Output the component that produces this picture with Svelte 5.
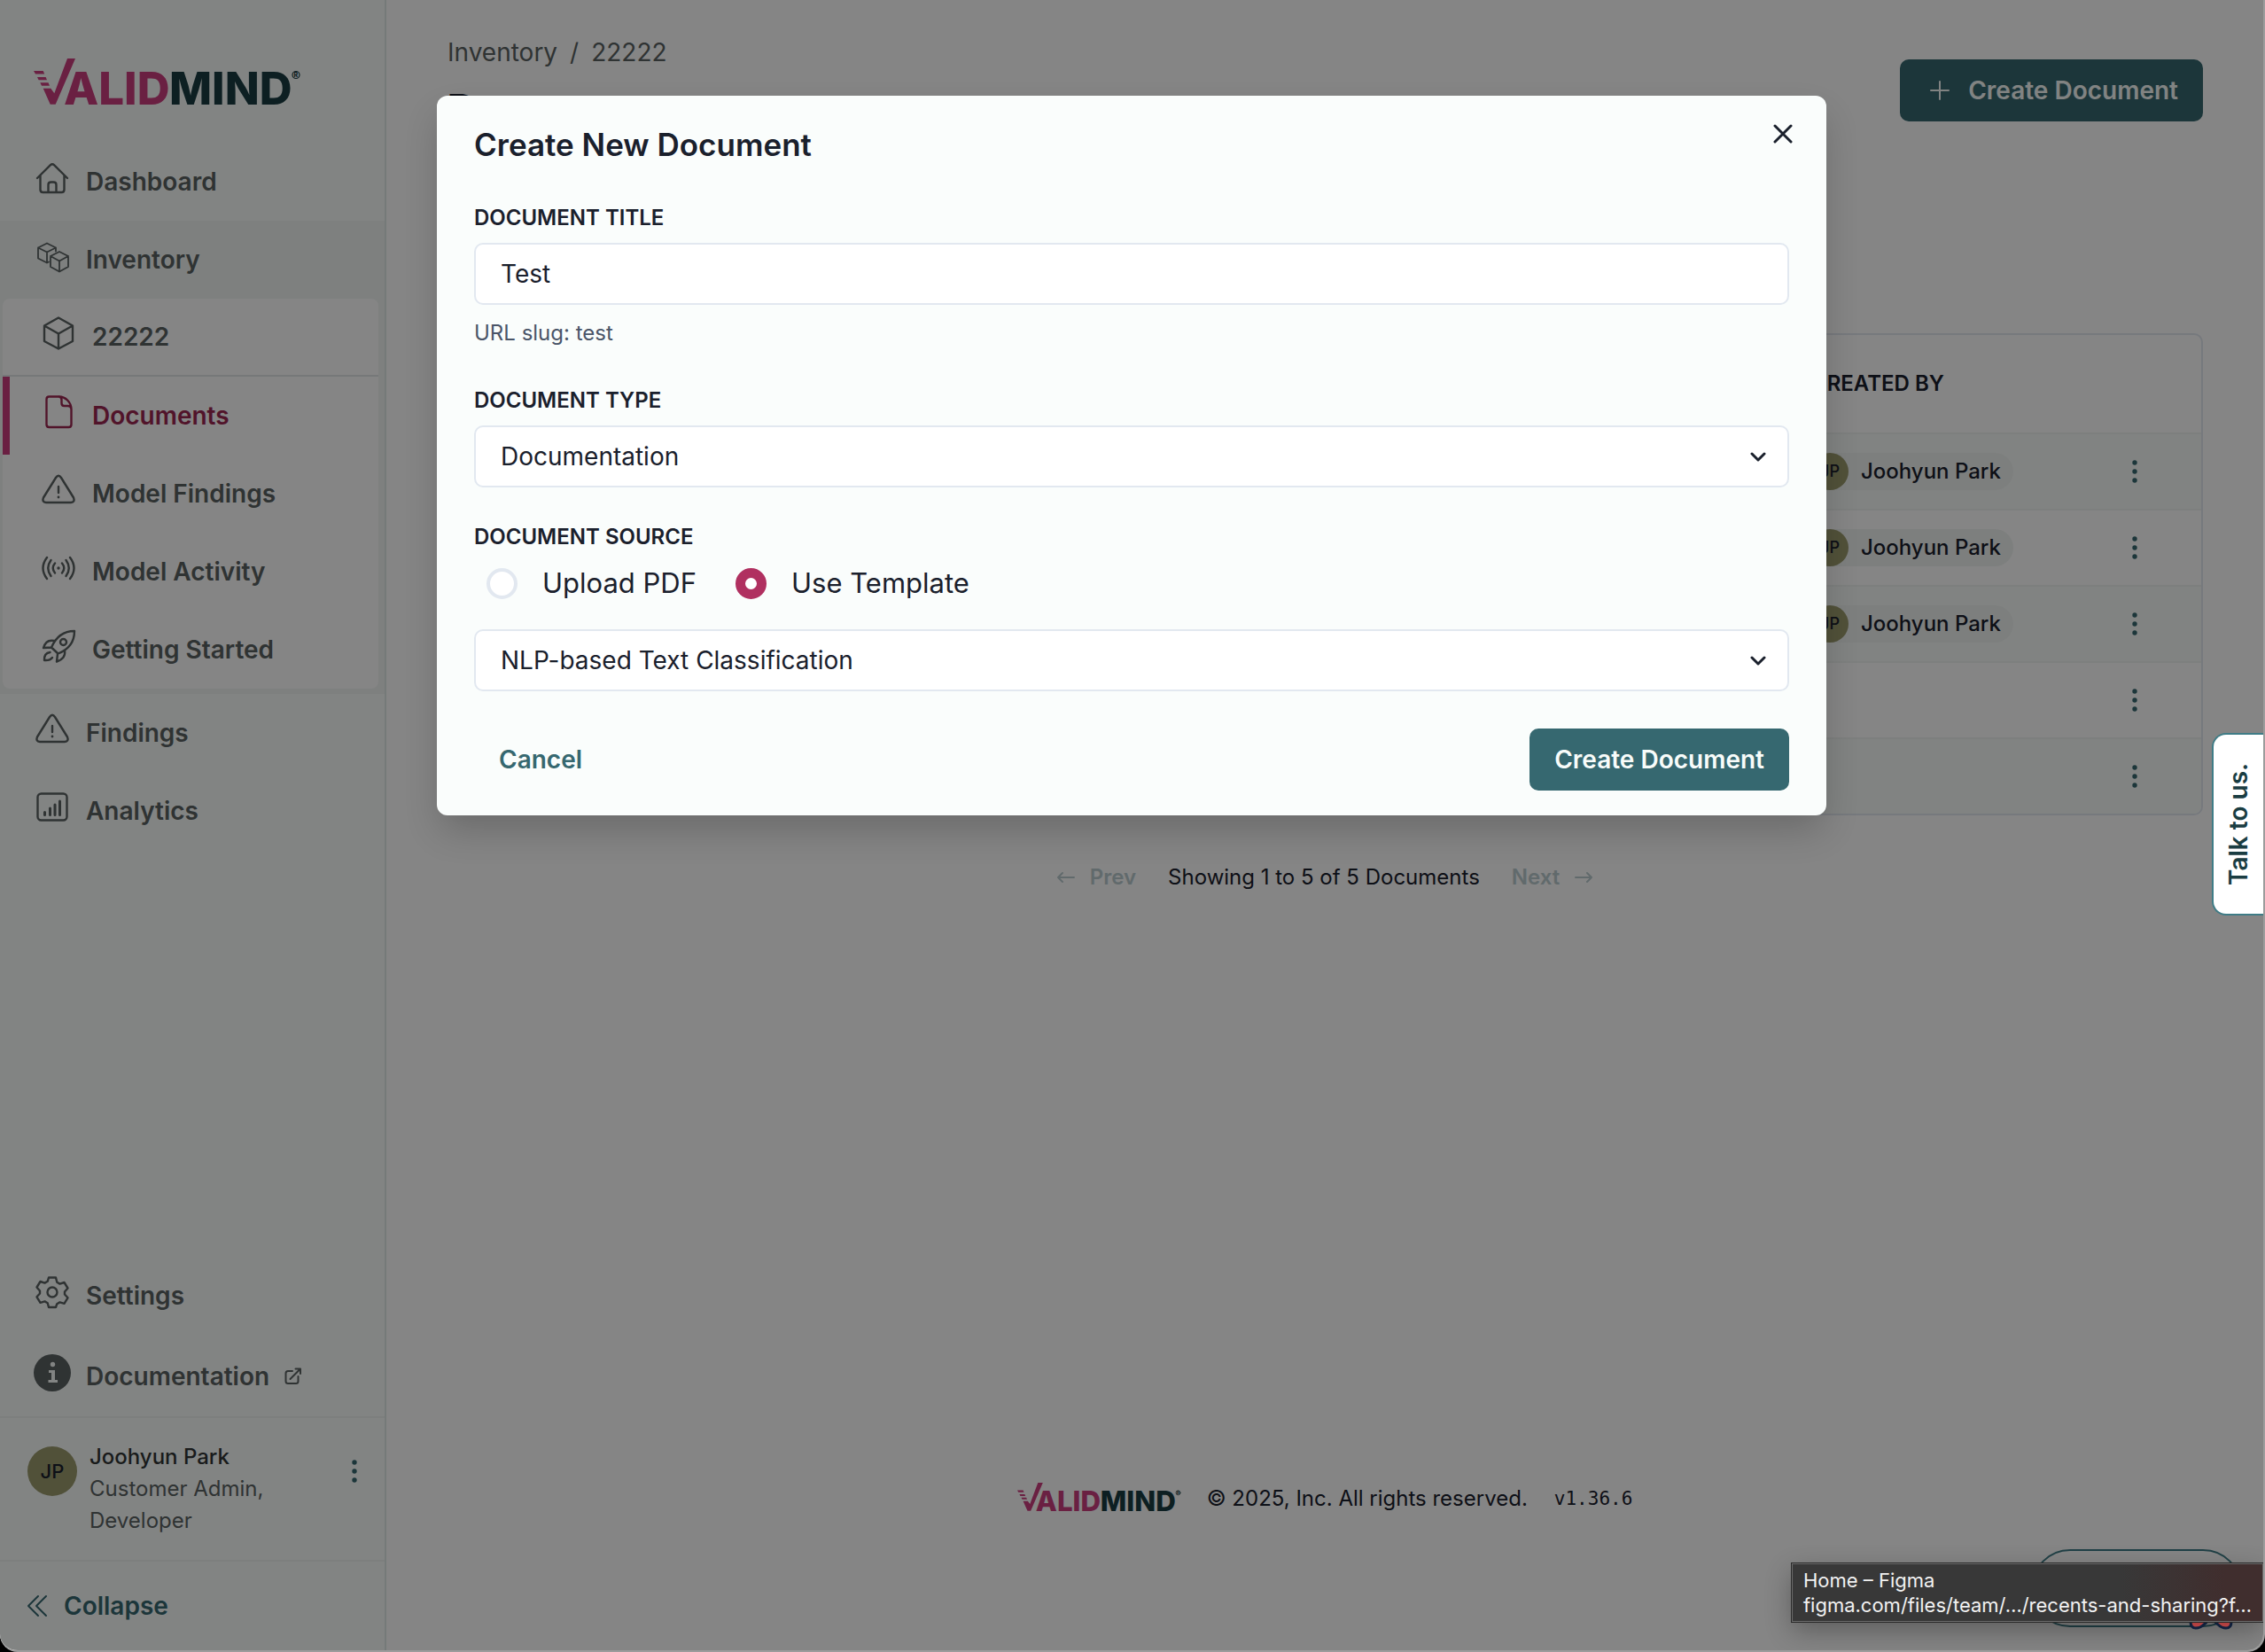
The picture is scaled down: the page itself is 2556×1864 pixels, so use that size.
<script lang="ts">
  // ============================================================================
  // Navigation
  // ============================================================================

  const modelItems = [
    { label: 'Documents', icon: 'document', active: true },
    { label: 'Model Findings', icon: 'warning', active: false },
    { label: 'Model Activity', icon: 'activity', active: false },
    { label: 'Getting Started', icon: 'rocket', active: false },
  ];

  const user = {
    name: 'Joohyun Park',
    initials: 'JP',
    roles: 'Customer Admin, Developer',
  };

  const authors: (string | null)[] = [user.name, user.name, user.name, null, null];

  // ============================================================================
  // Form state
  // ============================================================================

  let title = $state('Test');
  let documentType = $state('Documentation');
  let source = $state('template');
  let template = $state('NLP-based Text Classification');

  let slug = $derived(title.trim().toLowerCase().replace(/\s+/g, '-'));
</script>

{#snippet logo()}
  <svg class="logo" viewBox="0 0 300 52" role="img" aria-label="ValidMind">
    <g fill="#cc3f7f">
      <path d="M0 14h10.7l1.5 3.6H2zM4 21h9.6l1.4 3.3H5.600zM7.300 27.200h9.200l1.500 3.500H9z" />
      <path d="M10.700 33.700h8.600l4 5.500L38 0h9L24.700 51.700h-6z" />
      <text x="34" y="51.700">ALID</text>
    </g>
    <g fill="#1a3d42">
      <text x="153" y="51.700">MIND</text>
      <text class="mark" x="293.500" y="21.200">R</text>
    </g>
    <circle cx="296" cy="18.500" r="4" fill="none" stroke="#1a3d42" stroke-width="1.200" />
  </svg>
{/snippet}

{#snippet kebab()}
  <svg width="6" height="28" viewBox="0 0 6 28" fill="#366870" aria-hidden="true">
    <circle cx="3" cy="4" r="2.700" /><circle cx="3" cy="14" r="2.700" /><circle cx="3" cy="24" r="2.700" />
  </svg>
{/snippet}

{#snippet icon(name: string)}
  <svg class="icon" viewBox="0 0 42 42" aria-hidden="true">
    {#if name === 'home'}
      <path d="M4 21 19 6.200q2-2 4 0L38 21M7.500 18v16q0 3 3 3h21q3 0 3-3V18M16.500 37V28.500q0-3 3-3h3q3 0 3 3V37" />
    {:else if name === 'boxes'}
      <g stroke-width="1.800">
        <path d="M17 27.500l-2 1-10-5v-12l10-5 10 5v4M5 11.500l10 5 10-5M15 16.500v12" />
        <path d="M29 16l10 5v12l-10 5.500L19 33V21zM19 21l10 5.500L39 21M29 26.500v12" />
      </g>
    {:else if name === 'box'}
      <path d="M21 3.500l16 9v17.500l-16 8.500-16-8.500V12.500zM5 12.500l16 9 16-9M21 21.500v17" />
    {:else if name === 'document'}
      <path d="M21.500 3.500H10.500q-3 0-3 3v28.500q0 3 3 3h22q3 0 3-3V18C35.500 10 29 3.500 21.500 3.500q3 .5 3 3.500v4q0 3 3 3h4q3.500 0 4 3.500" />
    {:else if name === 'warning'}
      <path d="M18 7q3-4.500 6 0L38 29.500q2 5-3 5.500H7q-5-.5-3-5.500zM21 17v7" />
      <circle class="solid" cx="21" cy="29" r="1.400" />
    {:else if name === 'activity'}
      <path d="M8 9Q-1 21 8 33M12.500 12Q6 21 12.500 30M17 15.500Q12.500 21 17 26.500M34 9q9 12 0 24M29.500 12q6.500 9 0 18M25 15.500q4.500 5.500 0 11" />
      <circle class="solid" cx="21" cy="21" r="1.700" />
    {:else if name === 'rocket'}
      <path d="M13 22.500C18 11 27 4 39 4c0 12-7 21-18.500 25.500zM16 15q-9-2-12 8l9.500-.5M28 26q1.500 9-9 12.500l1-8.500M11.500 28q-7 1-6.500 9 6.500.5 9-3" />
      <circle cx="26.500" cy="16.500" r="3.500" />
    {:else if name === 'chart'}
      <rect x="4.500" y="5.500" width="33" height="30" rx="4" />
      <path stroke-width="3" d="M12.500 26.500v3M18.500 22v7.500M24 18v11.500M29.500 14v15.500" />
    {:else if name === 'gear'}
      <path d="M17 4.500h8l1.300 5.300 3.200 1.800 5-1.600 4 6.500-3.500 4v3l3.500 3.800-4 6.500-5-1.400-3.200 1.800L25 38h-8l-1.300-4.800-3.200-1.800-5 1.400-4-6.500L7 22.500v-3l-3.500-4 4-6.500 5 1.600 3.200-1.800z" />
      <circle cx="21" cy="21" r="5.500" />
    {:else if name === 'info'}
      <circle class="solid" cx="21" cy="21" r="21" />
      <g class="knockout">
        <circle cx="21.500" cy="11.500" r="2.700" />
        <path d="M17 18h7v11h3v3H16.500v-3H20v-8h-3z" />
      </g>
    {/if}
  </svg>
{/snippet}

<div class="window">
  <aside class="sidebar">
    <a class="brand" href="#home">{@render logo()}</a>

    <nav class="nav">
      <a class="nav-item" href="#dashboard">{@render icon('home')}Dashboard</a>

      <div class="nav-group">
        <a class="nav-item" href="#inventory">{@render icon('boxes')}Inventory</a>
        <div class="submenu">
          <a class="nav-item model" href="#model">{@render icon('box')}22222</a>
          {#each modelItems as item}
            <a class="nav-item" class:active={item.active} href="#{item.icon}">
              {@render icon(item.icon)}{item.label}
            </a>
          {/each}
        </div>
      </div>

      <a class="nav-item" href="#findings">{@render icon('warning')}Findings</a>
      <a class="nav-item" href="#analytics">{@render icon('chart')}Analytics</a>
    </nav>

    <div class="sidebar-bottom">
      <a class="nav-item" href="#settings">{@render icon('gear')}Settings</a>
      <a class="nav-item" href="#docs">
        {@render icon('info')}Documentation
        <svg class="external" viewBox="0 0 20 20" aria-hidden="true">
          <path d="M9 4H4Q1.500 4 1.500 6.500v9Q1.500 18 4 18h9q2.500 0 2.500-2.500V10M6.500 13 18 1.500M12.500 1.500H18V7" />
        </svg>
      </a>
      <div class="user">
        <span class="avatar">{user.initials}</span>
        <div class="user-text">
          <div class="user-name">{user.name}</div>
          <div>{user.roles}</div>
        </div>
        <button class="bare user-menu" aria-label="User menu">{@render kebab()}</button>
      </div>
      <button class="bare collapse">
        <svg width="24" height="26" viewBox="0 0 24 26" aria-hidden="true">
          <path d="M13 2 2 13l11 11M22 2 11 13l11 11" />
        </svg>
        Collapse
      </button>
    </div>
  </aside>

  <main class="main">
    <header class="page-header">
      <div>
        <nav class="breadcrumb" aria-label="Breadcrumb">
          <a href="#inventory">Inventory</a><span>/</span><a href="#model">22222</a>
        </nav>
        <h1>Documents</h1>
      </div>
      <button class="primary">
        <svg width="28" height="28" viewBox="0 0 28 28" aria-hidden="true">
          <path d="M14 4v20M4 14h20" />
        </svg>
        Create Document
      </button>
    </header>

    <div class="table-wrap">
      <table>
        <thead>
          <tr>
            <th></th>
            <th class="col-author">CREATED BY</th>
            <th class="col-menu"></th>
          </tr>
        </thead>
        <tbody>
          {#each authors as author}
            <tr>
              <td></td>
              <td>
                {#if author}
                  <span class="chip"><span class="avatar small">JP</span>{author}</span>
                {/if}
              </td>
              <td>
                <button class="bare" aria-label="Document actions">{@render kebab()}</button>
              </td>
            </tr>
          {/each}
        </tbody>
      </table>
    </div>

    <div class="pagination">
      <button class="bare page-btn" disabled>
        <svg width="20" height="14" viewBox="0 0 20 14" aria-hidden="true"><path d="M19 7H1M6 2 1 7l5 5" /></svg>
        Prev
      </button>
      <span>Showing 1 to {authors.length} of {authors.length} Documents</span>
      <button class="bare page-btn" disabled>
        Next
        <svg width="20" height="14" viewBox="0 0 20 14" aria-hidden="true"><path d="M1 7h18M14 2l5 5-5 5" /></svg>
      </button>
    </div>

    <footer class="footer">
      {@render logo()}
      <span>© 2025, Inc. All rights reserved.</span>
      <code>v1.36.6</code>
    </footer>
  </main>

  <div class="chat-pill"></div>

  <div class="overlay">
    <form class="modal" onsubmit={(e) => e.preventDefault()}>
      <h2>Create New Document</h2>
      <button type="button" class="bare close" aria-label="Close">
        <svg width="22" height="22" viewBox="0 0 22 22" aria-hidden="true"><path d="M2 2l18 18M20 2 2 20" /></svg>
      </button>

      <div class="field">
        <label for="doc-title">DOCUMENT TITLE</label>
        <input id="doc-title" class="control" type="text" bind:value={title} />
        <div class="hint">URL slug: {slug}</div>
      </div>

      <div class="field">
        <label for="doc-type">DOCUMENT TYPE</label>
        <div class="select">
          <select id="doc-type" class="control" bind:value={documentType}>
            <option>Documentation</option>
          </select>
          <svg class="chevron" viewBox="0 0 18 12" aria-hidden="true"><path d="M2 2l7 7 7-7" /></svg>
        </div>
      </div>

      <fieldset class="field">
        <legend>DOCUMENT SOURCE</legend>
        <div class="radios">
          <label class="radio"><input type="radio" value="pdf" bind:group={source} />Upload PDF</label>
          <label class="radio"><input type="radio" value="template" bind:group={source} />Use Template</label>
        </div>
        <div class="select">
          <select class="control" aria-label="Template" bind:value={template}>
            <option>NLP-based Text Classification</option>
          </select>
          <svg class="chevron" viewBox="0 0 18 12" aria-hidden="true"><path d="M2 2l7 7 7-7" /></svg>
        </div>
      </fieldset>

      <div class="modal-footer">
        <button type="button" class="ghost">Cancel</button>
        <button type="submit" class="primary">Create Document</button>
      </div>
    </form>
  </div>

  <button class="talk">Talk to us.</button>

  <svg class="bow" viewBox="0 0 50 20" aria-hidden="true">
    <path d="M2 2v8q0 7 6 7 5 0 9-4 6-4 6-11zM48 2v8q0 7-6 7-5 0-9-4-6-4-6-11z" />
  </svg>

  <div class="tooltip" role="tooltip">
    <div>Home – Figma</div>
    <div>figma.com/files/team/…/recents-and-sharing?f…</div>
  </div>
</div>

<style>
  :global(body) {
    background: #000;
  }

  .window {
    position: relative;
    display: flex;
    box-sizing: border-box;
    min-height: 100vh;
    overflow: hidden;
    border-right: 2px solid #9c9c9c;
    border-bottom: 2px solid #9c9c9c;
    border-radius: 0 0 20px 20px;
    background: #fff;
    color: #1a202c;
    font-family: Inter, 'Liberation Sans', sans-serif;
    font-size: 24px;
    line-height: 36px;
  }

  a {
    color: inherit;
    text-decoration: none;
  }

  svg {
    fill: none;
    stroke: currentColor;
    stroke-width: 2;
    stroke-linecap: round;
    stroke-linejoin: round;
    flex: none;
  }

  button {
    font: inherit;
    cursor: pointer;
  }

  .bare {
    display: flex;
    align-items: center;
    padding: 0;
    border: 0;
    background: none;
    color: inherit;
  }

  .bare circle {
    fill: #366870;
    stroke: none;
  }

  .logo {
    display: block;
    width: 300px;
    overflow: visible;
  }

  .logo path,
  .logo text {
    stroke: none;
    fill: inherit;
  }

  .logo text {
    font-size: 51px;
    font-weight: 800;
  }

  .logo text.mark {
    font-size: 7px;
  }

  /* Sidebar */
  .sidebar {
    display: flex;
    flex-direction: column;
    flex: none;
    box-sizing: border-box;
    width: 436px;
    border-right: 2px solid #e1eae8;
    background: #fafdfc;
    color: #5a6262;
  }

  .brand {
    padding: 66px 38px 43px;
  }

  .nav-item {
    display: flex;
    align-items: center;
    box-sizing: border-box;
    height: 88px;
    padding: 0 38px;
    gap: 17px;
    font-size: 28px;
    font-weight: 600;
  }

  .icon {
    width: 42px;
    height: 42px;
    padding-bottom: 8px;
    stroke-width: 2.4;
  }

  .icon .solid {
    fill: currentColor;
    stroke: none;
  }

  .knockout {
    fill: #fafdfc;
    stroke: none;
  }

  .nav-group {
    padding-bottom: 6px;
    background: #f1f5f4;
  }

  .submenu {
    margin: 0 7px 0 3px;
    overflow: hidden;
    border-radius: 8px;
    background: #fff;
  }

  .submenu .nav-item {
    padding-left: 42px;
  }

  .submenu .model {
    border-bottom: 2px solid #e2e6e8;
  }

  .submenu .active {
    padding-left: 34px;
    border-left: 8px solid #cc3f7f;
    color: #9c2752;
  }

  .sidebar-bottom {
    margin-top: auto;
  }

  .sidebar-bottom .nav-item {
    height: 91px;
  }

  .external {
    width: 20px;
    height: 20px;
  }

  .user {
    display: flex;
    gap: 14px;
    padding: 26px 31px;
    border: 2px solid #f0f3f2;
    border-width: 2px 0;
  }

  .avatar {
    display: flex;
    align-items: center;
    justify-content: center;
    flex: none;
    width: 56px;
    height: 56px;
    border-radius: 50%;
    background: #9b9b6e;
    color: #1a202c;
    font-size: 22px;
    font-weight: 500;
  }

  .user .avatar {
    margin-top: 6px;
  }

  .user-text {
    flex: 1;
    max-width: 230px;
  }

  .user-name {
    color: #303535;
    font-weight: 500;
  }

  .user-menu {
    height: 68px;
    margin-left: auto;
  }

  .collapse {
    width: 100%;
    height: 100px;
    padding: 0 30px;
    gap: 18px;
    color: #366870;
    font-size: 28px;
    font-weight: 600;
  }

  /* Page */
  .main {
    display: flex;
    flex-direction: column;
    flex: 1;
    padding: 0 68px;
  }

  .page-header {
    display: flex;
    justify-content: space-between;
    align-items: flex-start;
    height: 376px;
  }

  .breadcrumb {
    display: flex;
    gap: 14px;
    padding: 38px 0 14px 1px;
    color: #5a6262;
    font-size: 28px;
    line-height: 42px;
  }

  h1 {
    margin: 0;
    font-size: 48px;
    font-weight: 600;
    line-height: 60px;
  }

  .primary,
  .ghost {
    display: flex;
    align-items: center;
    gap: 14px;
    height: 70px;
    padding: 0 28px;
    border: 0;
    border-radius: 10px;
    background: #366870;
    color: #f8fcfa;
    font-size: 28px;
    font-weight: 600;
  }

  .ghost {
    background: none;
    color: #366870;
  }

  .page-header .primary {
    margin-top: 67px;
    padding-left: 31px;
    gap: 18px;
  }

  .table-wrap {
    overflow: hidden;
    border: 2px solid #e2e8f0;
    border-radius: 10px;
  }

  table {
    width: 100%;
    border-collapse: collapse;
    table-layout: fixed;
  }

  th {
    height: 110px;
    padding: 0;
    font-weight: 600;
    text-align: left;
  }

  td {
    height: 84px;
    padding: 0;
    border-top: 2px solid #f0f3f2;
  }

  tbody tr:nth-child(odd) {
    background: #f8fcfa;
  }

  .col-author {
    width: 362px;
  }

  .col-menu {
    width: 78px;
  }

  .chip {
    display: inline-flex;
    align-items: center;
    gap: 14px;
    padding-right: 14px;
    border-radius: 21px;
    background: #eff3f1;
    font-weight: 500;
    vertical-align: middle;
  }

  .avatar.small {
    width: 42px;
    height: 42px;
    font-size: 18px;
  }

  .pagination {
    display: flex;
    justify-content: center;
    gap: 36px;
    padding-top: 52px;
  }

  .page-btn {
    gap: 17px;
    color: #bbcccf;
    font-weight: 600;
  }

  .footer {
    display: flex;
    align-items: center;
    justify-content: center;
    gap: 30px;
    margin-top: auto;
    padding-bottom: 153px;
  }

  .footer .logo {
    width: 184px;
    padding-bottom: 4px;
  }

  .footer code {
    font-family: 'DejaVu Sans Mono', monospace;
    font-size: 21px;
  }

  .chat-pill {
    position: absolute;
    right: 24px;
    bottom: 26px;
    box-sizing: border-box;
    width: 238px;
    height: 88px;
    border: 2px solid #3f7c86;
    border-radius: 44px;
  }

  /* Modal */
  .overlay {
    position: absolute;
    inset: 0;
    display: flex;
    align-items: flex-start;
    justify-content: center;
    padding: 108px 40px 0;
    background: rgba(0, 0, 0, 0.48);
  }

  .modal {
    position: relative;
    box-sizing: border-box;
    width: 100%;
    max-width: 1568px;
    padding: 28px 42px;
    border-radius: 12px;
    background: #fafdfc;
    box-shadow: 0 20px 40px -4px rgba(0, 0, 0, 0.2);
  }

  h2 {
    margin: 0 0 38px;
    font-size: 35px;
    font-weight: 600;
    line-height: 54px;
  }

  .close {
    position: absolute;
    top: 32px;
    right: 38px;
  }

  .close svg {
    stroke-width: 3;
  }

  .field {
    margin: 0 0 38px;
    padding: 0;
    border: 0;
  }

  fieldset.field {
    margin-bottom: 42px;
  }

  .field > label,
  legend {
    display: block;
    margin-bottom: 10px;
    padding: 0;
    font-weight: 600;
  }

  .control {
    display: block;
    box-sizing: border-box;
    width: 100%;
    height: 70px;
    padding: 0 28px;
    border: 2px solid #e2e8f0;
    border-radius: 10px;
    background: #fff;
    color: #1a202c;
    font-family: inherit;
    font-size: 28px;
    appearance: none;
  }

  .hint {
    padding: 14px 0 2px;
    color: #4a5568;
  }

  .select {
    position: relative;
  }

  .chevron {
    position: absolute;
    top: 30px;
    right: 26px;
    width: 18px;
    height: 12px;
    stroke-width: 3;
    pointer-events: none;
  }

  .radios {
    display: flex;
    gap: 44px;
    padding: 0 14px 28px;
  }

  .radio {
    display: flex;
    align-items: center;
    gap: 28px;
    font-size: 31px;
    line-height: 48px;
  }

  .radio input {
    box-sizing: border-box;
    width: 35px;
    height: 35px;
    margin: 0;
    border: 4px solid #e2e8f0;
    border-radius: 50%;
    background: #fff;
    appearance: none;
  }

  .radio input:checked {
    border: 11px solid #b03060;
  }

  .modal-footer {
    display: flex;
    justify-content: space-between;
  }

  /* Floating items */
  .talk {
    position: absolute;
    top: 827px;
    right: 0;
    width: 58px;
    height: 206px;
    padding: 0;
    border: 2px solid #3f7c86;
    border-right: 0;
    border-radius: 16px 0 0 16px;
    background: #fff;
    color: #1a3d42;
    font-size: 28px;
    font-weight: 600;
    writing-mode: sideways-lr;
  }

  .bow {
    position: absolute;
    right: 34px;
    bottom: 22px;
    width: 50px;
    height: 20px;
    fill: #e05252;
    stroke: #14284b;
    stroke-width: 3;
  }

  .tooltip {
    position: absolute;
    right: 0;
    bottom: 32px;
    padding: 4px 12px;
    border: 1px solid #6b6b6b;
    outline: 1px solid #2a2a2a;
    background: linear-gradient(90deg, #383838 70%, #402e2e 92%);
    box-shadow: 0 10px 30px rgba(0, 0, 0, 0.3);
    color: #f2f2f2;
    font-size: 22px;
    line-height: 28px;
  }
</style>
